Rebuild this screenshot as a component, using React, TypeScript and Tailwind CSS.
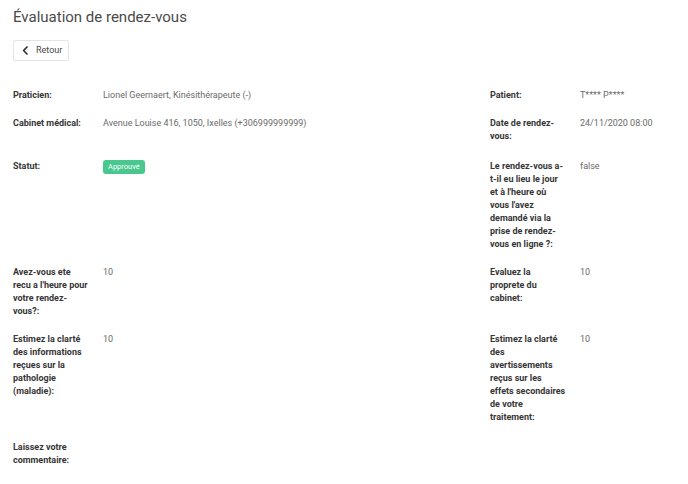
import React from 'react';

type Field = { label: string; value?: React.ReactNode };

const rows: [Field, Field | null][] = [
  [{ label: 'Praticien:', value: 'Lionel Geernaert, Kinésithérapeute (-)' }, { label: 'Patient:', value: 'T**** P****' }],
  [{ label: 'Cabinet médical:', value: 'Avenue Louise 416, 1050, Ixelles (+306999999999)' }, { label: 'Date de rendez-vous:', value: '24/11/2020 08:00' }],
  [
    { label: 'Statut:', value: <span className="inline-block h-[14px] rounded-[3px] bg-[#48c78e] px-[5px] align-top text-[7.5px] leading-[14px] text-white">Approuvé</span> },
    { label: "Le rendez-vous a-t-il eu lieu le jour et à l'heure où vous l'avez demandé via la prise de rendez-vous en ligne ?:", value: 'false' },
  ],
  [{ label: "Avez-vous ete recu a l'heure pour votre rendez-vous?:", value: '10' }, { label: 'Evaluez la proprete du cabinet:', value: '10' }],
  [
    { label: 'Estimez la clarté des informations reçues sur la pathologie (maladie):', value: '10' },
    { label: 'Estimez la clarté des avertissements reçus sur les effets secondaires de votre traitement:', value: '10' },
  ],
  [{ label: 'Laissez votre commentaire:' }, null],
];

const rowTop = ['', '', 'pt-[2px]', '', '', 'pt-[2px]'];

const Item = ({ f }: { f: Field | null }) => {
  if (!f) return <div />;
  return (
    <div className="flex">
      <div className="w-[76px] shrink-0 font-bold text-[#363636]">{f.label}</div>
      <div className="ml-[14px] text-[#6b6b6b]">{f.value}</div>
    </div>
  );
};

export default function App() {
  return (
    <div className="min-h-screen bg-white px-[13px] pt-[6px] font-['Roboto',sans-serif]">
      <h1 className="text-[15px] leading-[22px] text-[#4a4a4a]">Évaluation de rendez-vous</h1>
      <button className="mt-[12px] flex h-[21px] items-center gap-[7px] rounded-[2px] border border-[#e4e4e4] bg-white pl-[8px] pr-[6px] text-[9px] text-[#4a4a4a]">
        <svg width="7" height="9" viewBox="0 0 7 9" fill="none" stroke="#333" strokeWidth="1.7" strokeLinecap="round" strokeLinejoin="round">
          <path d="M5 1 1.6 4.5 5 8" />
        </svg>
        Retour
      </button>
      <div className="mt-[28px] text-[9px] leading-[13px]">
        {rows.map(([l, r], i) => (
          <div key={i} className={`grid grid-cols-[477px_1fr] pb-[15px] ${rowTop[i]}`}>
            <Item f={l} />
            <Item f={r} />
          </div>
        ))}
      </div>
    </div>
  );
}
